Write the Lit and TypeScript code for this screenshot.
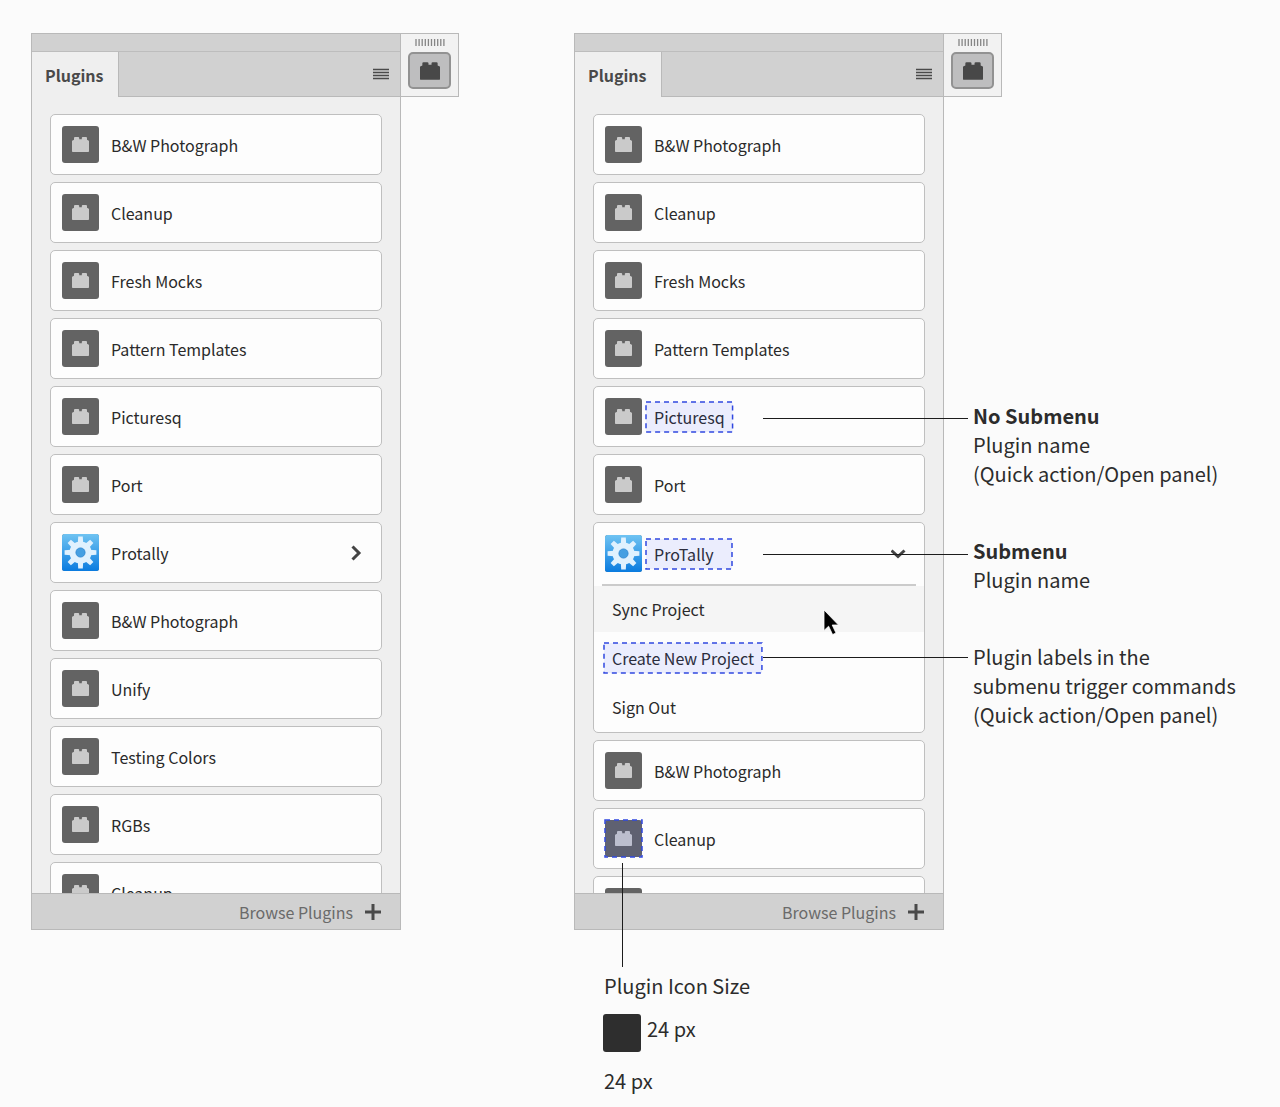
import { LitElement, html, css, svg, nothing } from "lit";
import { customElement, property } from "lit/decorators.js";

interface Plugin {
  name: string;
  kind?: "gear";
  chevron?: "right" | "down";
  mark?: "label" | "icon";
  commands?: { label: string; hover?: boolean; mark?: boolean }[];
}

const brickPath =
  "M0 4.2Q0 3.6 .6 3.4L2 2.8V1Q2 0 3 0H6.2Q7.2 0 7.2 1V2.2H9.8V1Q9.8 0 10.8 0H14Q15 0 15 1V2.8L16.4 3.4Q17 3.6 17 4.2V14.2Q17 15 16.2 15H.8Q0 15 0 14.2Z";

const brick = (cls: string) =>
  html`<svg class=${cls} viewBox="0 0 17 15" aria-hidden="true"><path d=${brickPath} fill="currentColor"></path></svg>`;

const gear = html`<svg class="gear" viewBox="0 0 37 37" aria-hidden="true">
  <defs>
    <linearGradient id="sky" x1="0" y1="0" x2="0" y2="1">
      <stop offset="0" stop-color="#6fc3f2"></stop>
      <stop offset="1" stop-color="#0a7bdf"></stop>
    </linearGradient>
  </defs>
  <rect width="37" height="37" rx="2.5" fill="url(#sky)"></rect>
  <g fill="#e0f1fe">
    ${[0, 45, 90, 135, 180, 225, 270, 315].map(
      (a) => svg`<path d="M15.8 9L16.2 2.6H20.8L21.2 9Z" transform=${`rotate(${a} 18.5 18.5)`}></path>`
    )}
    <circle cx="18.5" cy="18.5" r="11"></circle>
  </g>
  <circle cx="18.5" cy="18.5" r="4.6" fill="#459fe2" stroke="#2b84cf" stroke-width="0.8"></circle>
</svg>`;

const outline = html`<svg class="outline" aria-hidden="true"><rect width="100%" height="100%"></rect></svg>`;

const names = (list: string[]): Plugin[] => list.map((name) => ({ name }));

const basicPlugins: Plugin[] = [
  ...names(["B&W Photograph", "Cleanup", "Fresh Mocks", "Pattern Templates", "Picturesq", "Port"]),
  { name: "Protally", kind: "gear", chevron: "right" },
  ...names(["B&W Photograph", "Unify", "Testing Colors", "RGBs", "Cleanup"]),
];

const expandedPlugins: Plugin[] = [
  ...names(["B&W Photograph", "Cleanup", "Fresh Mocks", "Pattern Templates"]),
  { name: "Picturesq", mark: "label" },
  { name: "Port" },
  {
    name: "ProTally",
    kind: "gear",
    chevron: "down",
    mark: "label",
    commands: [
      { label: "Sync Project", hover: true },
      { label: "Create New Project", mark: true },
      { label: "Sign Out" },
    ],
  },
  { name: "B&W Photograph" },
  { name: "Cleanup", mark: "icon" },
  { name: "" },
];

@customElement("plugin-panel")
export class PluginPanel extends LitElement {
  @property({ attribute: false }) plugins: Plugin[] = [];

  static styles = css`
    :host {
      display: block;
      color: #2a2a2a;
    }
    * {
      box-sizing: border-box;
    }
    button {
      font: inherit;
      color: inherit;
      background: none;
      border: 0;
      margin: 0;
      padding: 0;
      text-align: left;
    }
    .panel {
      display: flex;
      flex-direction: column;
      background: #efefef;
      border: 1px solid #b9b9b9;
    }
    .grab {
      height: 18px;
      background: #d1d1d1;
      border-bottom: 1px solid #bdbdbd;
    }
    .tabs {
      display: flex;
      height: 45px;
    }
    .tab {
      padding: 0 14px 0 13px;
      border-right: 1px solid #b9b9b9;
      font-size: 16px;
      font-weight: 700;
      line-height: 44px;
      color: #4a4a4a;
    }
    .strip {
      flex: 1;
      display: flex;
      justify-content: flex-end;
      align-items: center;
      padding-right: 11px;
      background: #d1d1d1;
      border-bottom: 1px solid #b9b9b9;
    }
    .menu {
      display: flex;
    }
    .menu svg {
      width: 16px;
      height: 12px;
    }
    .list {
      display: flex;
      flex-direction: column;
      gap: 7px;
      height: 796px;
      margin: 0;
      padding: 17px 18px 0;
      list-style: none;
      overflow: hidden;
    }
    .card {
      flex: none;
      background: #fdfdfd;
      border: 1px solid #bfbfbf;
      border-radius: 5px;
    }
    .row {
      display: flex;
      align-items: center;
      gap: 12px;
      width: 100%;
      height: 59px;
      padding: 0 17px 0 11px;
      font-size: 16px;
      line-height: 30px;
    }
    .expanded .row {
      height: 61px;
    }
    .icon {
      position: relative;
      display: flex;
      align-items: center;
      justify-content: center;
      width: 37px;
      height: 37px;
      border-radius: 3px;
      background: #636363;
      color: #cacaca;
    }
    .brick {
      width: 17px;
      height: 15px;
    }
    .gear {
      width: 37px;
      height: 37px;
    }
    .name {
      position: relative;
    }
    .name.marked {
      min-width: 86px;
      margin-left: -8px;
      padding: 0 8px;
    }
    .outline {
      position: absolute;
      inset: 0;
      width: 100%;
      height: 100%;
      overflow: visible;
    }
    .outline rect {
      fill: rgb(60 80 255 / 0.09);
      stroke: #3048e0;
      stroke-width: 1.5;
      stroke-dasharray: 5 4;
    }
    .chevron {
      width: 16px;
      height: 16px;
      margin-left: auto;
      fill: none;
      stroke: #444;
      stroke-width: 3;
    }
    .commands {
      display: flex;
      flex-direction: column;
      gap: 3px;
      margin: 0;
      padding: 0 0 2px;
      list-style: none;
    }
    .rule {
      height: 2px;
      margin: 0 8px;
      border: 0;
      background: #cbcbcb;
    }
    .command {
      display: flex;
      align-items: center;
      width: 100%;
      height: 46px;
      padding: 0 18px;
      font-size: 16px;
      line-height: 30px;
    }
    .command.hover {
      background: #f5f5f5;
    }
    .footer {
      display: flex;
      align-items: center;
      justify-content: flex-end;
      height: 36px;
      padding-right: 19px;
      background: #d1d1d1;
      border-top: 1px solid #b9b9b9;
    }
    .browse {
      display: flex;
      align-items: center;
      gap: 12px;
      font-size: 16px;
      line-height: 30px;
      color: #6a6a6a;
    }
    .plus {
      width: 16px;
      height: 16px;
      stroke: #4a4a4a;
      stroke-width: 3;
    }
  `;

  private renderRow(p: Plugin) {
    return html`<button class="row" type="button">
      <span class="icon">${p.kind ? gear : brick("brick")}${p.mark === "icon" ? outline : nothing}</span>
      <span class=${p.mark === "label" ? "name marked" : "name"}>${p.name}${p.mark === "label" ? outline : nothing}</span>
      ${p.chevron
        ? html`<svg class="chevron" viewBox="0 0 16 16" aria-hidden="true">
            <path d=${p.chevron === "right" ? "M4.5 1.5L11 8L4.5 14.5" : "M.5 4.5L7 10.5L13.5 4.5"}></path>
          </svg>`
        : nothing}
    </button>`;
  }

  render() {
    return html`<section class="panel">
      <div class="grab"></div>
      <div class="tabs">
        <button class="tab" type="button">Plugins</button>
        <div class="strip">
          <button class="menu" type="button" aria-label="Panel menu">
            <svg viewBox="0 0 16 12"><path d="M0 1.5H16M0 4.5H16M0 7.5H16M0 10.5H16" stroke="#4a4a4a" stroke-width="1.5"></path></svg>
          </button>
        </div>
      </div>
      <ul class="list">
        ${this.plugins.map(
          (p) => html`<li class=${p.commands ? "card expanded" : "card"}>
            ${this.renderRow(p)}
            ${p.commands
              ? html`<hr class="rule" />
                  <ul class="commands">
                    ${p.commands.map(
                      (c) => html`<li>
                        <button class=${c.hover ? "command hover" : "command"} type="button">
                          <span class=${c.mark ? "name marked" : "name"}>${c.label}${c.mark ? outline : nothing}</span>
                        </button>
                      </li>`
                    )}
                  </ul>`
              : nothing}
          </li>`
        )}
      </ul>
      <div class="footer">
        <button class="browse" type="button">
          Browse Plugins
          <svg class="plus" viewBox="0 0 16 16" aria-hidden="true"><path d="M8 0V16M0 8H16"></path></svg>
        </button>
      </div>
    </section>`;
  }
}

@customElement("icon-rail")
export class IconRail extends LitElement {
  static styles = css`
    :host {
      display: block;
    }
    .rail {
      display: flex;
      flex-direction: column;
      align-items: center;
      gap: 6px;
      box-sizing: border-box;
      width: 58px;
      height: 64px;
      padding-top: 5px;
      background: #f2f2f2;
      border: 1px solid #b9b9b9;
      border-left: 0;
    }
    .grip {
      width: 30px;
      height: 7px;
    }
    .toggle {
      display: flex;
      align-items: center;
      justify-content: center;
      width: 43px;
      height: 37px;
      padding: 0;
      border: 2px solid #929292;
      border-radius: 5px;
      background: #bebebf;
      color: #484848;
    }
    .big {
      width: 20px;
      height: 18px;
    }
  `;

  render() {
    return html`<div class="rail">
      <svg class="grip" viewBox="0 0 30 7" aria-hidden="true">
        <path
          d=${Array.from({ length: 10 }, (_, i) => `M${i * 3.1 + 1} 0V7`).join("")}
          stroke="#858585"
          stroke-width="1.3"
        ></path>
      </svg>
      <button class="toggle" type="button" aria-label="Plugins">${brick("big")}</button>
    </div>`;
  }
}

@customElement("app-root")
export class AppRoot extends LitElement {
  static styles = css`
    :host {
      display: block;
      min-height: 100vh;
      box-sizing: border-box;
      background: #fbfbfb;
      color: #2c2c2c;
      font-family: "Noto Sans CJK SC", "Noto Sans", sans-serif;
    }
    .page {
      display: grid;
      grid-template-columns: 370fr 173fr 370fr 336fr;
      align-items: start;
      padding: 33px 0 11px 31px;
    }
    .annotated {
      position: relative;
    }
    .leader {
      position: absolute;
      left: 189px;
      right: -24px;
      height: 1px;
      background: #1c1c1c;
    }
    .drop {
      position: absolute;
      top: 830px;
      left: 48px;
      width: 1px;
      height: 104px;
      background: #1c1c1c;
    }
    .callouts {
      display: flex;
      flex-direction: column;
      gap: 48px;
      padding: 304px 0 0 29px;
    }
    .callouts p,
    .size p {
      margin: 0;
      font-size: 20px;
      line-height: 29px;
      white-space: nowrap;
    }
    .size {
      display: flex;
      flex-direction: column;
      gap: 14px;
      padding: 41px 0 0 30px;
    }
    .sample {
      display: flex;
      gap: 6px;
    }
    .swatch {
      width: 38px;
      height: 38px;
      margin-left: -1px;
      border-radius: 3px;
      background: #2e2e2e;
    }
    .cursor {
      position: absolute;
      top: 576px;
      left: 249px;
      width: 17px;
      height: 27px;
    }
  `;

  render() {
    return html`<main class="page">
      <plugin-panel .plugins=${basicPlugins}></plugin-panel>
      <icon-rail></icon-rail>
      <div class="annotated">
        <plugin-panel .plugins=${expandedPlugins}></plugin-panel>
        <div class="size">
          <p>Plugin Icon Size</p>
          <div class="sample"><span class="swatch"></span><p>24 px</p></div>
          <p>24 px</p>
        </div>
        ${[385, 521, 624].map((y) => html`<span class="leader" style="top:${y}px"></span>`)}
        <span class="drop"></span>
        <svg class="cursor" viewBox="0 0 17 27" aria-hidden="true">
          <path d="M1 1V21.5L5.6 17.2L9.6 25.6L13 24L9.2 16H15.5Z" fill="#000" stroke="#fff" stroke-width="0.8"></path>
        </svg>
      </div>
      <div>
        <icon-rail></icon-rail>
        <div class="callouts">
          <p><b>No Submenu</b><br />Plugin name<br />(Quick action/Open panel)</p>
          <p><b>Submenu</b><br />Plugin name</p>
          <p>Plugin labels in the<br />submenu trigger commands<br />(Quick action/Open panel)</p>
        </div>
      </div>
    </main>`;
  }
}
